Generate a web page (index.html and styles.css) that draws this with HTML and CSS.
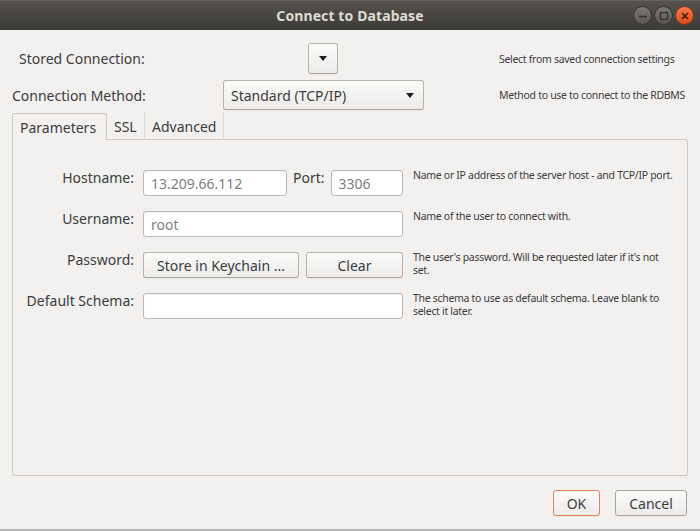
FILE: index.html
```html
<!DOCTYPE html>
<html>
<head>
<meta charset="utf-8">
<title>Connect to Database</title>
<link rel="stylesheet" href="styles.css">
</head>
<body>
<div class="window">
  <header class="titlebar">
    <div class="tb-spacer"></div>
    <div class="title">Connect to Database</div>
    <div class="wm-buttons">
      <span class="wm wm-min"><svg width="10" height="10" viewBox="0 0 10 10"><path d="M1 5.5h8" stroke="#33322f" stroke-width="1.6"/></svg></span>
      <span class="wm wm-max"><svg width="10" height="10" viewBox="0 0 10 10"><rect x="1.5" y="1.5" width="7" height="7" fill="none" stroke="#33322f" stroke-width="1.3"/></svg></span>
      <span class="wm wm-close"><svg width="10" height="10" viewBox="0 0 10 10"><path d="M2 2l6 6M8 2l-6 6" stroke="#3b1a0c" stroke-width="1.5"/></svg></span>
    </div>
  </header>

  <main class="content">
    <div class="top-grid">
      <div class="top-label stored">Stored Connection:</div>
      <div class="top-field"><button class="btn drop-btn"><svg class="arrow" width="8" height="5" viewBox="0 0 8 5"><path d="M0 0h8L4 5z" fill="#1e1e1e"/></svg></button></div>
      <div class="hint">Select from saved connection settings</div>

      <div class="top-label method">Connection Method:</div>
      <div class="top-field"><button class="btn combo"><span>Standard (TCP/IP)</span><svg class="arrow" width="8" height="5" viewBox="0 0 8 5"><path d="M0 0h8L4 5z" fill="#1e1e1e"/></svg></button></div>
      <div class="hint">Method to use to connect to the RDBMS</div>
    </div>

    <nav class="tabs">
      <div class="tab active">Parameters</div>
      <div class="tab">SSL</div>
      <div class="tab">Advanced</div>
    </nav>

    <section class="panel">
      <div class="form">
        <div class="flabel">Hostname:</div>
        <div class="field host-row">
          <div class="input host">13.209.66.112</div>
          <span class="port-label">Port:</span>
          <div class="input port">3306</div>
        </div>
        <div class="desc">Name or IP address of the server host - and TCP/IP port.</div>

        <div class="flabel">Username:</div>
        <div class="field"><div class="input wide">root</div></div>
        <div class="desc">Name of the user to connect with.</div>

        <div class="flabel">Password:</div>
        <div class="field pw-row">
          <button class="btn store">Store in Keychain ...</button>
          <button class="btn clear">Clear</button>
        </div>
        <div class="desc">The user's password. Will be requested later if it's not set.</div>

        <div class="flabel">Default Schema:</div>
        <div class="field"><div class="input wide empty"></div></div>
        <div class="desc">The schema to use as default schema. Leave blank to select it later.</div>
      </div>
    </section>

    <footer class="actions">
      <button class="btn ok">OK</button>
      <button class="btn cancel">Cancel</button>
    </footer>
  </main>
</div>
</body>
</html>
```

FILE: styles.css
```css
* { box-sizing: border-box; }

body {
  margin: 0;
  width: 700px;
  height: 531px;
  overflow: hidden;
  background: #f2f1f0;
  font-family: "Noto Sans", "Open Sans", sans-serif;
  font-size: 14px;
  color: #3c3c3c;
}

.window {
  display: flex;
  flex-direction: column;
  height: 531px;
  border-bottom: 2px solid #b9b7b3;
}

/* ---------- title bar ---------- */
.titlebar {
  height: 30px;
  flex: none;
  display: grid;
  grid-template-columns: 1fr auto 1fr;
  align-items: center;
  background: linear-gradient(#57544f 0%, #4a4843 40%, #3d3b37 100%);
  border-top: 1px solid #66635d;
}

.title {
  color: #dfdbd2;
  font-weight: bold;
  font-size: 14px;
  letter-spacing: 0.1px;
}

.wm-buttons {
  justify-self: end;
  display: flex;
  gap: 2px;
  padding-right: 6px;
}

.wm {
  width: 19px;
  height: 19px;
  border-radius: 50%;
  display: flex;
  align-items: center;
  justify-content: center;
  border: 1px solid #353430;
  background: linear-gradient(#7c7a74, #58564f);
}

.wm-close {
  border-color: #8a3414;
  background: linear-gradient(#f47a4e, #df4b18);
}

/* ---------- content ---------- */
.content {
  flex: 1;
  display: flex;
  flex-direction: column;
  padding: 0 12px;
}

.top-grid {
  display: grid;
  grid-template-columns: 211px 276px 1fr;
  grid-template-rows: 31px 30px;
  row-gap: 6px;
  align-items: center;
  padding-top: 13px;
}

.top-label.stored { padding-left: 7px; }

.hint {
  font-size: 10.5px;
  letter-spacing: -0.3px;
  white-space: nowrap;
}

.btn {
  font-family: inherit;
  font-size: 14px;
  color: #3c3c3c;
  background: linear-gradient(#fbfbfa, #ecebe9);
  border: 1px solid #b7b3ae;
  border-bottom-color: #a9a5a0;
  border-radius: 3px;
  box-shadow: 0 1px 0 rgba(0, 0, 0, 0.04);
  padding: 0;
  margin: 0;
  display: flex;
  align-items: center;
  justify-content: center;
}

.drop-btn {
  width: 30px;
  height: 31px;
  margin-left: 85px;
}

.combo {
  width: 201px;
  height: 30px;
  justify-content: space-between;
  padding: 0 9px 0 7px;
}

/* ---------- tabs ---------- */
.tabs {
  display: flex;
  height: 26px;
  margin-top: 3px;
  flex: none;
}

.tab {
  display: flex;
  align-items: center;
  padding: 0 7px 0 7px;
  border-right: 1px solid #dcd9d5;
  margin-bottom: -1px;
  position: relative;
}

.tab.active {
  padding: 0 7px 0 7px;
  width: 95px;
  border: 1px solid #cbc7c2;
  border-bottom: none;
  border-radius: 3px 3px 0 0;
  background: #f2f1f0;
  z-index: 1;
}

.tab:nth-child(2) { width: 38px; }
.tab:nth-child(3) { width: 79px; }

/* ---------- panel ---------- */
.panel {
  flex: 1;
  border: 1px solid #cbc7c2;
  border-radius: 0 3px 3px 3px;
  padding-top: 30px;
}

.form {
  display: grid;
  grid-template-columns: 121px 260px 264px;
  grid-auto-rows: 26px;
  column-gap: 9px;
  row-gap: 15px;
}

.form .desc { margin-left: 1px; }

.flabel {
  text-align: right;
  line-height: 17px;
  margin-top: -1px;
}

.field { display: flex; }

.host-row { gap: 6px; align-items: flex-start; }
.port-label { line-height: 17px; margin-top: -1px; }

.input {
  height: 26px;
  background: #fff;
  border: 1px solid #bcb8b3;
  border-radius: 3px;
  box-shadow: inset 0 1px 1px rgba(0, 0, 0, 0.05);
  color: #808080;
  display: flex;
  align-items: center;
  padding-left: 7px;
}

.input.host { width: 144px; }
.input.port { flex: 1; }
.input.wide { width: 100%; }

.desc {
  font-size: 10.5px;
  line-height: 13px;
  letter-spacing: -0.3px;
  margin-top: -1px;
}

.pw-row { gap: 7px; }
.store { width: 156px; height: 26px; }
.clear { flex: 1; height: 26px; }

/* ---------- footer ---------- */
.actions {
  flex: none;
  display: flex;
  justify-content: flex-end;
  gap: 15px;
  padding: 14px 1px 13px 0;
}

.ok, .cancel { height: 26px; }
.ok { width: 47px; border-color: #e3825b; }
.cancel { width: 72px; border-color: #a8a5a0; }
```
